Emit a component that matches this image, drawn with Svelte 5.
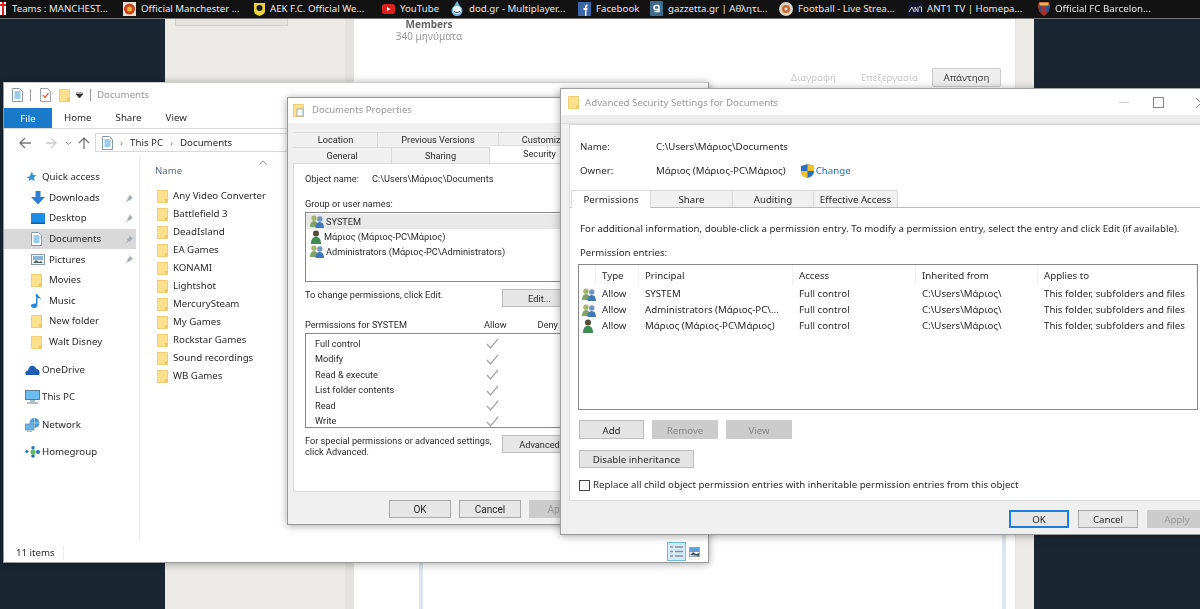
<script>
  const bar = [
    { w: 123, t: 'Teams : MANCHEST...', i: 'cross', x: 12 },
    { w: 131, t: 'Official Manchester ...', i: 'mu' },
    { w: 128, t: 'AEK F.C. Official We...', i: 'aek' },
    { w: 68, t: 'YouTube', i: 'yt' },
    { w: 128, t: 'dod.gr - Multiplayer...', i: 'dod' },
    { w: 72, t: 'Facebook', i: 'fb' },
    { w: 129, t: 'gazzetta.gr | Αθλητι...', i: 'gz' },
    { w: 129, t: 'Football - Live Strea...', i: 'fl' },
    { w: 130, t: 'ANT1 TV | Homepa...', i: 'ant' },
    { w: 162, t: 'Official FC Barcelon...', i: 'fcb' }
  ];
  const side = [
    { t: 'Quick access', k: 'top', i: 'star' },
    { t: 'Downloads', i: 'down', pin: 1 },
    { t: 'Desktop', i: 'desk', pin: 1 },
    { t: 'Documents', i: 'doc', pin: 1, sel: 1 },
    { t: 'Pictures', i: 'pic', pin: 1 },
    { t: 'Movies', i: 'folder' },
    { t: 'Music', i: 'music' },
    { t: 'New folder', i: 'folder' },
    { t: 'Walt Disney', i: 'folder' },
    { t: 'OneDrive', k: 'big first', i: 'cloud' },
    { t: 'This PC', k: 'big', i: 'pc' },
    { t: 'Network', k: 'big', i: 'net' },
    { t: 'Homegroup', k: 'big', i: 'home' }
  ];
  const files = ['Any Video Converter','Battlefield 3','DeadIsland','EA Games','KONAMI','Lightshot','MercurySteam','My Games','Rockstar Games','Sound recordings','WB Games'];
  const perms = ['Full control','Modify','Read & execute','List folder contents','Read','Write'];
  const entries = [
    ['g','SYSTEM'],
    ['g','Administrators (Μάριος-PC\\...'],
    ['u','Μάριος (Μάριος-PC\\Μάριος)']
  ];
</script>

{#snippet folder()}
  <svg class="ic" width="11" height="13" viewBox="0 0 11 13"><rect x=".5" y=".5" width="10" height="12" fill="#fbe08e" stroke="#f3cf73"/><rect x="8" y="9" width="2.5" height="3.5" fill="#f2c95f"/></svg>
{/snippet}
{#snippet doc()}
  <svg class="ic" width="11" height="14" viewBox="0 0 11 14"><path d="M.5.5h7l3 3v10H.5z" fill="#fff" stroke="#8a99a6"/><path d="M2.5 4h6M2.5 6h6M2.5 8h6M2.5 10h6" stroke="#3b9ad8"/></svg>
{/snippet}
{#snippet group()}
  <svg class="ic" width="14" height="13" viewBox="0 0 14 13"><circle cx="4" cy="3.3" r="2.7" fill="#a9b66e"/><path d="M0 12c0-4 1.5-6 4-6s4 2 4 6z" fill="#7fa36a"/><circle cx="9.8" cy="4" r="2.7" fill="#6f97c4"/><path d="M5.5 13c0-4 1.5-6 4.2-6S14 9 14 13z" fill="#3f78b8"/></svg>
{/snippet}
{#snippet user()}
  <svg class="ic" width="12" height="14" viewBox="0 0 12 14"><circle cx="6" cy="3.5" r="3" fill="#5a4a38"/><path d="M1 14c0-5 2-7.2 5-7.2s5 2.2 5 7.2z" fill="#3f8a55"/></svg>
{/snippet}
{#snippet sideIcon(i)}
  {#if i === 'folder'}{@render folder()}
  {:else if i === 'doc'}{@render doc()}
  {:else if i === 'star'}<svg class="ic" width="12" height="12" viewBox="0 0 12 12"><path d="M7 .5l1 3.6 3.6.2-2.8 2.3 1 3.7L6.6 8.2 3.4 10.4l.9-2.9L1 6l3.6-.5z" fill="#2f94e0"/></svg>
  {:else if i === 'down'}<svg class="ic" width="14" height="14" viewBox="0 0 14 14"><path d="M4.5 0h5v6H14l-7 7.5L0 6h4.500z" fill="#2d7fd6"/></svg>
  {:else if i === 'desk'}<svg class="ic" width="14" height="11" viewBox="0 0 14 11"><rect width="14" height="11" rx="1" fill="#1d8fe6"/><rect y="9.500" width="14" height="1.500" fill="#0d5fb0"/></svg>
  {:else if i === 'pic'}<svg class="ic" width="14" height="11" viewBox="0 0 14 11"><rect x=".5" y=".5" width="13" height="10" fill="#eef2f5" stroke="#8d98a2"/><rect x="2" y="2" width="10" height="4" fill="#8ab6d8"/><path d="M2 9l3-3 3 2 2-1 2 2z" fill="#4d6e5c"/></svg>
  {:else if i === 'music'}<svg class="ic" width="11" height="14" viewBox="0 0 11 14"><path d="M5 0h1.400c.3 2.500 3.600 3 3.600 6-.8-1.500-2-2-3.500-2.300V11c0 1.800-1.500 3-3.500 3S0 13 0 11.800C0 10.300 1.600 9.300 5 9.600z" fill="#2a86dc"/></svg>
  {:else if i === 'cloud'}<svg class="ic" width="15" height="10" viewBox="0 0 15 10"><path d="M1 10C-.5 8 .5 5.500 3 5.500 3.500 2 6 0 8.500 1c1.500.5 2.500 1.500 3 3C14 4 15.500 7 14 10z" fill="#1e5fb4"/></svg>
  {:else if i === 'pc'}<svg class="ic" width="15" height="14" viewBox="0 0 15 14"><rect x=".5" y=".5" width="14" height="9" fill="#6bbcee" stroke="#5a7d96"/><path d="M5 11h5M2 13h11" stroke="#9aa8b3" stroke-width="1.500"/></svg>
  {:else if i === 'net'}<svg class="ic" width="15" height="14" viewBox="0 0 15 14"><circle cx="9.500" cy="5" r="5" fill="#4f9ad0"/><path d="M5 5h10M9.500 0v10" stroke="#bcdcf0" stroke-width=".7"/><rect x="0" y="6" width="9" height="6" fill="#69b4e6" stroke="#6e8da3" stroke-width=".7"/><path d="M2 13.300h5" stroke="#9aa8b3"/></svg>
  {:else if i === 'home'}<svg class="ic" width="15" height="12" viewBox="0 0 15 12"><circle cx="1.800" cy="5.500" r="1.600" fill="#2a6fbe"/><circle cx="8" cy="1.800" r="1.700" fill="#2a6fbe"/><circle cx="8" cy="10" r="1.800" fill="#2a6fbe"/><circle cx="13" cy="6" r="2" fill="#2a6fbe"/><circle cx="8" cy="6" r="2.600" fill="#5cb85c"/></svg>
  {/if}
{/snippet}
{#snippet barIcon(i)}
  {#if i === 'cross'}<svg class="bi first" width="6" height="13" viewBox="0 0 6 13"><rect width="6" height="13" fill="#fff"/><path d="M0 3h6M3 0v13" stroke="#d22" stroke-width="2"/></svg>
  {:else if i === 'mu'}<svg class="bi" width="13" height="14" viewBox="0 0 13 14"><rect width="13" height="14" fill="#e8e2d5"/><circle cx="6.500" cy="7" r="5.500" fill="#c9421c"/><circle cx="6.500" cy="7" r="2.500" fill="#e8b93c"/></svg>
  {:else if i === 'aek'}<svg class="bi" width="11" height="14" viewBox="0 0 11 14"><path d="M0 1h11v8c0 3-3 4-5.500 5C3 13 0 12 0 9z" fill="#e9d23a"/><circle cx="5.500" cy="6" r="3" fill="#1a1a1a"/></svg>
  {:else if i === 'yt'}<svg class="bi" width="13" height="10" viewBox="0 0 13 10"><rect width="13" height="10" rx="2.500" fill="#d9201f"/><path d="M5 3l3.500 2L5 7z" fill="#fff"/></svg>
  {:else if i === 'dod'}<svg class="bi" width="14" height="15" viewBox="0 0 14 15"><path d="M7 0l3 5a5.500 5.500 0 1 1-6 0z" fill="#6fb6dc"/><circle cx="7" cy="9" r="4" fill="#eaf4fa"/><path d="M4 10c1 2 5 2 6 0" stroke="#235" fill="none"/></svg>
  {:else if i === 'fb'}<svg class="bi" width="13" height="14" viewBox="0 0 13 14"><rect width="13" height="14" fill="#3b66a8"/><path d="M7 14V8H5.500V6H7V4.500C7 3 8 2.500 9.500 2.500V4.500C8.700 4.500 8.500 4.700 8.500 5.300V6h1l-.3 2h-.7v6z" fill="#fff"/></svg>
  {:else if i === 'gz'}<svg class="bi" width="13" height="15" viewBox="0 0 13 15"><rect width="13" height="15" rx="1" fill="#3e6c8a"/><path d="M9 4.500H6a1.800 1.800 0 0 0 0 4h3V4.500M9 8v2.500H4.500" stroke="#fff" stroke-width="1.500" fill="none"/></svg>
  {:else if i === 'fl'}<svg class="bi" width="14" height="14" viewBox="0 0 14 14"><circle cx="7" cy="7" r="7" fill="#d9d3c8"/><circle cx="7" cy="7" r="4" fill="#c8682c"/><circle cx="7" cy="7" r="1.500" fill="#eee"/></svg>
  {:else if i === 'ant'}<svg class="bi" width="14" height="14" viewBox="0 0 14 14"><rect width="14" height="14" fill="#13132a"/><path d="M1 10l3-5 2 5M7 10V5l3 5V5M11 5h2.500v5" stroke="#ccd" fill="none"/></svg>
  {:else if i === 'fcb'}<svg class="bi" width="12" height="14" viewBox="0 0 12 14"><path d="M1 0h10l1 3c0 6-3 9-6 11C3 12 0 9 0 3z" fill="#a8332e"/><rect x="1" y="4" width="10" height="6" fill="#2f4f8e"/><rect x="4" y="4" width="4" height="6" fill="#a33"/><rect x="1.500" y="0.500" width="9" height="3" fill="#e2b84d"/></svg>
  {/if}
{/snippet}

<div class="screen">
  <header class="bookmarks">
    {#each bar as b}
      <div class="bm" style="width:{b.w}px">{@render barIcon(b.i)}<span>{b.t}</span></div>
    {/each}
  </header>

  <div class="page">
    <aside class="gutter"><div class="oldbtn"></div></aside>
    <main class="forum">
      <div class="author"><b>Members</b><span>340 μηνύματα</span></div>
      <div class="actions">
        <span>Διαγραφή</span><span>Επεξεργασία</span><button class="reply">Απάντηση</button>
      </div>
      <div class="rule"></div>
      <div class="rule right"></div>
    </main>
    <aside class="gutter2"></aside>
  </div>

  <section class="win explorer">
    <div class="ex-title">
      {@render doc()}<i class="sep"></i>
      <svg class="ic nudge" width="11" height="14" viewBox="0 0 11 14"><path d="M.5.5h7l3 3v10H.5z" fill="#fff" stroke="#9aa3ab"/><path d="M3 7l2 2.500L8.500 5" stroke="#e2643a" stroke-width="1.300" fill="none"/></svg>
      <span class="nudge">{@render folder()}</span>
      <svg class="ic" width="7" height="6" viewBox="0 0 7 6"><path d="M0 0h7M0 2l3.500 4L7 2z" stroke="#333" stroke-width=".8" fill="#333"/></svg>
      <i class="sep"></i><span class="wtitle">Documents</span>
    </div>
    <nav class="ribbon">
      <span class="file">File</span><span>Home</span><span>Share</span><span>View</span>
    </nav>
    <div class="addr">
      <svg width="84" height="14" viewBox="0 0 84 14"><path d="M3 7h11M8 2L3 7l5 5" stroke="#777" stroke-width="1.300" fill="none"/><path d="M29 7h10M34 2l5 5-5 5" stroke="#ccc" stroke-width="1.300" fill="none"/><path d="M49 6l2.500 2.500L54 6" stroke="#888" fill="none"/><path d="M67 13V3M62 7l5-5 5 5" stroke="#777" stroke-width="1.300" fill="none"/></svg>
      <div class="crumbs">{@render doc()}<em>›</em><span>This PC</span><em>›</em><span>Documents</span></div>
    </div>
    <div class="ex-body">
      <ul class="side">
        {#each side as s}
          <li class="{s.k ?? ''}" class:sel={s.sel}>
            <b class="sic">{@render sideIcon(s.i)}</b><span>{s.t}</span>
            {#if s.pin}<svg class="pin" width="9" height="9" viewBox="0 0 9 9"><path d="M5 0l4 4-1.500.5L5.500 7 5 6 1 9l3-4-1-.5L5.500 2z" fill="#a7adb3"/></svg>{/if}
          </li>
        {/each}
      </ul>
      <div class="filelist">
        <div class="fhead"><span>Name</span><svg width="8" height="5" viewBox="0 0 8 5"><path d="M.5 4.500L4 1l3.500 3.500" stroke="#999" fill="none"/></svg></div>
        {#each files as f}<div class="frow">{@render folder()}<span>{f}</span></div>{/each}
      </div>
    </div>
    <footer class="status">
      <span class="count">11 items</span>
      <div class="views">
        <b class="vact"><svg width="13" height="13" viewBox="0 0 13 13"><path d="M0 2h3M0 6.500h3M0 11h3M5 2h8M5 6.500h8M5 11h8" stroke="#8b8f94" stroke-width="1.500"/></svg></b>
        <svg width="11" height="10" viewBox="0 0 11 10"><rect x=".5" y=".5" width="10" height="9" fill="#fff" stroke="#9aa"/><rect x="1" y="1" width="9" height="4" fill="#5d9fd6"/><path d="M1 8l3-3 3 2 3-1v3z" fill="#456"/></svg>
      </div>
    </footer>
  </section>

  <section class="win props">
    <div class="dlg-title">
      <svg class="ic" width="11" height="13" viewBox="0 0 11 13"><rect x=".5" y=".5" width="10" height="12" fill="#fbe08e" stroke="#f3cf73"/><rect x="4" y="5" width="6" height="7" fill="#fff" stroke="#6a9cc8" stroke-width=".7"/></svg>
      <span>Documents Properties</span>
    </div>
    <div class="p-body">
      <div class="trow r1"><span style="width:84px">Location</span><span style="width:121px">Previous Versions</span><span style="width:90px">Customize</span></div>
      <div class="trow r2"><span style="width:99px">General</span><span style="width:98px">Sharing</span><span class="on" style="width:100px">Security</span></div>
      <div class="p-panel">
        <div class="objname"><span>Object name:</span><span>C:\Users\Μάριος\Documents</span></div>
        <div class="grp">Group or user names:</div>
        <div class="ulist">
          <div class="u sel">{@render group()}<span>SYSTEM</span></div>
          <div class="u">{@render user()}<span>Μάριος (Μάριος-PC\Μάριος)</span></div>
          <div class="u">{@render group()}<span>Administrators (Μάριος-PC\Administrators)</span></div>
        </div>
        <div class="ln edit"><span>To change permissions, click Edit.</span><button class="wbtn">Edit...</button></div>
        <div class="phead"><span>Permissions for SYSTEM</span><span class="pa">Allow</span><span class="pd">Deny</span></div>
        <div class="plist">
          {#each perms as p}
            <div class="pr"><span>{p}</span><svg width="13" height="11" viewBox="0 0 13 11"><path d="M1 6l3.500 4L12 1" stroke="#aaa" stroke-width="1.400" fill="none"/></svg></div>
          {/each}
        </div>
        <div class="ln adv"><span>For special permissions or advanced settings,<br>click Advanced.</span><button class="wbtn">Advanced</button></div>
      </div>
      <div class="p-foot"><button class="fbtn">OK</button><button class="fbtn">Cancel</button><button class="fbtn dis">Apply</button></div>
    </div>
  </section>

  <section class="win adv-win">
    <div class="a-title">
      {@render folder()}<span>Advanced Security Settings for Documents</span>
      <div class="caps">
        <i class="min"></i><i class="max"></i>
        <svg width="10" height="10" viewBox="0 0 10 10"><path d="M0 0l10 10M10 0L0 10" stroke="#888"/></svg>
      </div>
    </div>
    <div class="a-strip"></div>
    <div class="a-panel">
      <div class="meta"><span>Name:</span><span>C:\Users\Μάριος\Documents</span></div>
      <div class="meta owner"><span>Owner:</span><span>Μάριος (Μάριος-PC\Μάριος)</span>
        <svg class="shield" width="13" height="14" viewBox="0 0 13 14"><path d="M6.500 0L13 2v5c0 4-3 6-6.500 7C3 13 0 11 0 7V2z" fill="#2a6fc2"/><path d="M6.500 0L13 2v5H6.500zM6.500 7v7C3 13 0 11 0 7z" fill="#f3c227"/></svg>
        <a href="#change">Change</a>
      </div>
      <div class="a-tabs"><span class="on" style="width:80px">Permissions</span><span style="width:82px">Share</span><span style="width:81px">Auditing</span><span style="width:84px">Effective Access</span></div>
      <p class="hint">For additional information, double-click a permission entry. To modify a permission entry, select the entry and click Edit (if available).</p>
      <p class="hint2">Permission entries:</p>
      <div class="table">
        <div class="tr th"><span></span><span>Type</span><span>Principal</span><span>Access</span><span>Inherited from</span><span>Applies to</span></div>
        {#each entries as e}
          <div class="tr">
            <span class="ticon">{#if e[0] === 'g'}{@render group()}{:else}{@render user()}{/if}</span>
            <span>Allow</span><span>{e[1]}</span><span>Full control</span><span>C:\Users\Μάριος\</span><span>This folder, subfolders and files</span>
          </div>
        {/each}
      </div>
      <div class="btns"><button class="gbtn" style="width:65px">Add</button><button class="gbtn dis" style="width:66px">Remove</button><button class="gbtn dis" style="width:66px">View</button></div>
      <button class="gbtn dinh">Disable inheritance</button>
      <label class="chk"><i></i><span>Replace all child object permission entries with inheritable permission entries from this object</span></label>
    </div>
    <div class="a-foot"><button class="abtn def">OK</button><button class="abtn">Cancel</button><button class="abtn dis">Apply</button></div>
  </section>
</div>

<style>
  :global(body) { margin: 0; background: #1a2733; }
  .screen {
    position: relative; width: 1200px; height: 609px; overflow: hidden;
    font: 9.7px/16px "Noto Sans", "Open Sans", sans-serif; color: #2a2a2a;
    filter: blur(0.35px);
  }
  button { font: inherit; color: inherit; padding: 2px 0 0; }
  .ic { display: block; flex: none; }
  p { margin: 0; }

  .bookmarks { display: flex; height: 19px; background: #121212; border-bottom: 1px solid #777; box-sizing: border-box; color: #e8e8e8; }
  .bm { display: flex; align-items: center; flex: none; box-sizing: border-box; white-space: nowrap; padding-bottom: 1px; }
  .bi { flex: none; margin-right: 5px; }
  .bi.first { margin-right: 6px; }

  .page { display: flex; height: 590px; padding-left: 165px; }
  .gutter { width: 180px; background: #ecebe8; border-right: 9px solid #e4e3df; flex: none; }
  .oldbtn { width: 113px; height: 7px; margin-left: 10px; background: #e3e2df; border: 1px solid #cfcfcc; border-top: 0; box-sizing: border-box; }
  .forum { width: 661px; background: #fff; position: relative; flex: none; }
  .author { display: flex; flex-direction: column; align-items: center; width: 150px; margin-top: -1px; line-height: 12px; color: #999; font-size: 10px; }
  .author b { color: #666; }
  .actions { display: flex; justify-content: flex-end; align-items: center; gap: 25px; margin-top: 26px; padding-right: 14px; height: 19px; color: #c8c8c8; }
  .reply { width: 69px; height: 19px; background: #eee; border: 1px solid #ccc; border-radius: 2px; color: #444; margin-left: -11px; padding: 0; }
  .rule { position: absolute; left: 65px; top: 500px; width: 4px; height: 100px; background: #dde6ee; }
  .rule.right { left: 648px; }
  .gutter2 { width: 19px; background: #ecebe8; border-left: 1px solid #d8e4ee; flex: none; box-sizing: border-box; }

  .win { position: absolute; box-sizing: border-box; box-shadow: 0 1px 8px rgba(0,0,0,.35); }

  .explorer { left: 3px; top: 82px; width: 706px; height: 481px; background: #fff; border: 1px solid #9a9a9a; border-top-color: #ccc; display: flex; flex-direction: column; }
  .ex-title { display: flex; align-items: center; gap: 6px; height: 25px; padding: 0 0 1px 8px; box-sizing: border-box; color: #999; flex: none; }
  .sep { width: 1px; height: 12px; background: #999; margin: 0 1px; }
  .nudge { margin-left: 2px; }
  .wtitle { margin-left: -1px; }
  .ribbon { display: flex; height: 20px; flex: none; align-items: center; border-bottom: 1px solid #dcdcdc; }
  .ribbon span { margin-right: 24px; }
  .ribbon .file { width: 48px; height: 20px; margin-right: 12px; background: #1979ca; color: #fff; text-align: center; line-height: 21px; }
  .addr { display: flex; align-items: center; height: 27px; flex: none; padding-left: 13px; }
  .crumbs { display: flex; align-items: center; height: 19px; flex: 1; margin-left: -6px; padding-left: 6px; border: 1px solid #d9d9d9; border-right: 0; box-sizing: border-box; }
  .crumbs em { font-style: normal; color: #888; margin: 0 7px; }
  .ex-body { display: flex; flex: 1; min-height: 0; }
  .side { list-style: none; margin: 0; padding: 11px 0 0 0; width: 136px; border-right: 1px solid #ebebeb; box-sizing: border-box; flex: none; }
  .side li { display: flex; align-items: center; height: 20.6px; padding-left: 27px; margin-right: 3px; position: relative; }
  .side li.sel { background: #d9d9d9; }
  .side li.top, .side li.big { padding-left: 21px; }
  .side li.big { height: 27.4px; }
  .side li.first { margin-top: 4px; }
  .sic { width: 18px; display: flex; justify-content: flex-start; flex: none; font-weight: 400; }
  .side li.top .sic, .side li.big .sic { width: 17px; }
  .pin { position: absolute; right: 3px; top: 6px; }
  .filelist { padding: 0 0 0 15px; flex: 1; }
  .fhead { display: flex; height: 31px; padding-bottom: 1px; box-sizing: border-box; align-items: center; color: #5b6b85; width: 112px; position: relative; }
  .fhead svg { position: absolute; left: 104px; top: 4px; }
  .frow { display: flex; align-items: center; gap: 5px; height: 18px; padding-left: 2px; }
  .status { display: flex; align-items: center; height: 21px; padding: 2px 0 0 12px; box-sizing: border-box; flex: none; position: relative; }
  .count { padding-right: 8px; border-right: 1px solid #eee; line-height: 14px; }
  .views { position: absolute; right: 8px; top: 1px; display: flex; align-items: center; gap: 3px; }
  .vact { display: flex; align-items: center; justify-content: center; width: 19px; height: 19px; box-sizing: border-box; background: #d4ebf9; border: 1px solid #72bde8; }

  .props { left: 287px; top: 97px; width: 320px; height: 428px; background: #f0f0f0; border: 1px solid #999; font-family: Roboto, "Noto Sans", sans-serif; font-size: 9.2px; }
  .dlg-title { display: flex; align-items: center; gap: 8px; height: 25px; padding: 0 0 1px 5px; box-sizing: border-box; background: #fff; color: #999; font-family: "Noto Sans", sans-serif; font-size: 9.5px; }
  .p-body { padding: 9px 0 0 5px; }
  .trow { display: flex; }
  .trow span { box-sizing: border-box; border: 1px solid #d9d9d9; border-bottom: 0; border-left-width: 0; background: #f0f0f0; text-align: center; white-space: nowrap; overflow: hidden; }
  .trow.r1 { height: 15px; padding-left: 1px; line-height: 13px; }
  .trow.r2 { height: 16px; line-height: 15px; }
  .trow .on { background: #fff; height: 18px; margin-top: -2px; border-color: #ddd; }
  .p-panel { background: #fff; border: 1px solid #d9d9d9; height: 329px; box-sizing: border-box; padding: 7px 0 0 11px; }
  .objname { display: grid; grid-template-columns: 67px auto; justify-content: start; }
  .grp { margin-top: 9px; }
  .ulist { height: 70px; width: 290px; border: 1px solid #888; box-sizing: border-box; padding: 1px 0 0 4px; }
  .u { display: flex; align-items: center; gap: 1px; height: 15px; margin-left: -4px; padding-left: 4px; }
  .u.sel { background: #e8e8e8; }
  .u .ic { margin-right: 1px; }
  .ln { display: flex; align-items: flex-start; }
  .ln span { flex: none; width: 197px; line-height: 11px; white-space: nowrap; }
  .edit { margin-top: 7px; }
  .wbtn { width: 75px; height: 18px; background: #e6e6e6; border: 1px solid #bbb; line-height: 14px; flex: none; }
  .phead { display: flex; margin-top: 10px; height: 16px; line-height: 16px; }
  .phead span:first-child { width: 179px; }
  .pd { margin-left: 31px; }
  .plist { width: 290px; height: 95px; box-sizing: border-box; border: 1px solid #888; padding: 2px 0 0 9px; overflow: hidden; }
  .pr { display: flex; align-items: center; justify-content: space-between; width: 184px; height: 15.500px; }
  .pr span { width: 170px; }
  .adv { margin-top: 7px; }
  .p-foot { display: flex; gap: 8px; padding: 8px 0 0 96px; }
  .fbtn { width: 62px; height: 18px; background: #e6e6e6; border: 1px solid #aaa; flex: none; line-height: 14px; font-size: 10px; }
  .fbtn.dis { background: #ccc; border-color: #ccc; color: #999; }

  .adv-win { left: 560px; top: 88px; width: 660px; height: 447px; background: #f0f0f0; border: 1px solid #a0a0a0; border-bottom-color: #999; }
  .a-title { display: flex; align-items: center; gap: 6px; height: 26px; padding: 1px 0 0 7px; box-sizing: border-box; background: #fff; color: #999; position: relative; }
  .caps { position: absolute; left: 558px; top: 8px; display: flex; align-items: center; }
  .min { width: 10px; height: 1px; background: #ccc; margin-right: 24px; }
  .max { width: 9px; height: 9px; border: 1px solid #888; margin-right: 32px; }
  .a-strip { height: 9px; background: #ededed; border-bottom: 1px solid #ddd; box-sizing: border-box; }
  .a-panel { margin-left: 8px; height: 377px; background: #fff; border: 1px solid #d9d9d9; box-sizing: border-box; padding-top: 14px; position: relative; }
  .meta { display: grid; grid-template-columns: 76px auto; justify-content: start; padding-left: 10px; align-items: center; }
  .meta.owner { grid-template-columns: 76px auto auto auto; margin-top: 8px; }
  .shield { margin-left: 15px; margin-right: 2px; }
  .meta a { color: #1a73c8; text-decoration: none; }
  .a-tabs { display: flex; height: 18px; margin-top: 11px; padding-left: 1px; border-bottom: 1px solid #bbb; box-sizing: border-box; }
  .a-tabs span { box-sizing: border-box; background: #f0f0f0; border: 1px solid #d9d9d9; border-left-width: 0; border-bottom: 0; text-align: center; line-height: 17px; }
  .a-tabs .on { background: #fff; height: 18px; border-left-width: 1px; }
  .hint { margin-top: 12px; line-height: 18px; padding-left: 10px; white-space: nowrap; }
  .hint2 { margin-top: 7px; padding-left: 10px; }
  .table { margin: 3px 0 0 8px; width: 620px; height: 146px; box-sizing: border-box; border: 1px solid #888; overflow: hidden; }
  .tr { display: grid; grid-template-columns: 17px 43px 154px 123px 122px auto; height: 16px; box-sizing: border-box; line-height: 16px; align-items: center; }
  .tr > span { padding-left: 6px; white-space: nowrap; }
  .tr.th { height: 20px; margin-bottom: 1px; }
  .th > span { border-right: 1px solid #f0f0f0; height: 20px; line-height: 21px; box-sizing: border-box; }
  .ticon { padding-left: 3px !important; }
  .btns { display: flex; gap: 8px; margin: 10px 0 0 9px; }
  .gbtn { height: 19px; background: #e4e4e4; border: 1px solid #bdbdbd; line-height: 14px; }
  .gbtn.dis { background: #ccc; border-color: #ccc; color: #888; }
  .dinh { display: block; width: 115px; height: 18px; margin: 11px 0 0 9px; }
  .chk { display: flex; align-items: center; gap: 3px; margin: 9px 0 0 9px; }
  .chk i { width: 11px; height: 11px; border: 1px solid #444; box-sizing: border-box; background: #fff; }
  .a-foot { display: flex; gap: 9px; padding: 9px 0 0 448px; }
  .abtn { width: 60px; height: 18px; background: #e6e6e6; border: 1px solid #aaa; line-height: 14px; flex: none; }
  .abtn.def { border: 1px solid #1a7fd8; box-shadow: inset 0 0 0 1px #1a7fd8; }
  .abtn.dis { background: #ccc; border-color: #ccc; color: #999; }
</style>
